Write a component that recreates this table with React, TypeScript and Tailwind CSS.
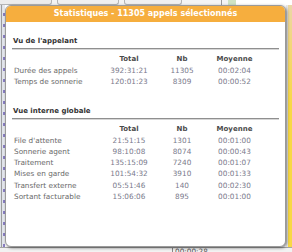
import React from "react";

type Row = { label: string; total: string; nb: string; avg: string };

const appelant: Row[] = [
  { label: "Durée des appels", total: "392:31:21", nb: "11305", avg: "00:02:04" },
  { label: "Temps de sonnerie", total: "120:01:23", nb: "8309", avg: "00:00:52" },
];

const interne: Row[] = [
  { label: "File d'attente", total: "21:51:15", nb: "1301", avg: "00:01:00" },
  { label: "Sonnerie agent", total: "98:10:08", nb: "8074", avg: "00:00:43" },
  { label: "Traitement", total: "135:15:09", nb: "7240", avg: "00:01:07" },
  { label: "Mises en garde", total: "101:54:32", nb: "3910", avg: "00:01:33" },
  { label: "Transfert externe", total: "05:51:46", nb: "140", avg: "00:02:30" },
  { label: "Sortant facturable", total: "15:06:06", nb: "895", avg: "00:01:00" },
];

function Section({ title, rows, first }: { title: string; rows: Row[]; first?: boolean }) {
  return (
    <div className={first ? "pt-[14px]" : "pt-[18px]"}>
      {/* Section title with rule */}
      <div className="h-[13px] border-b border-[#8f8f8f] shadow-[0_1px_0_#d6d6d6] text-[7px] font-bold leading-[11px] text-[#333] pl-[1px]">
        {title}
      </div>
      <div className="mt-[5px] pl-[2px] grid grid-cols-[90px_50px_56px_49px] text-[7.3px] leading-[11.2px]">
        <div />
        <div className="text-center font-bold text-[7px] text-[#4a4a4a]">Total</div>
        <div className="text-center font-bold text-[7px] text-[#4a4a4a]">Nb</div>
        <div className="text-center font-bold text-[7px] text-[#4a4a4a]">Moyenne</div>
        {rows.map((r) => (
          <React.Fragment key={r.label}>
            <div className="text-[#6a6a6a] whitespace-nowrap">{r.label}</div>
            <div className="text-center text-[#7a7a8c]">{r.total}</div>
            <div className="text-center text-[#7a7a8c]">{r.nb}</div>
            <div className="text-center text-[#7a7a8c]">{r.avg}</div>
          </React.Fragment>
        ))}
      </div>
    </div>
  );
}

export default function App() {
  return (
    <div
      className="relative w-[292px] h-[252px] overflow-hidden bg-white [font-variant-ligatures:none]"
      style={{ fontFamily: '"DejaVu Sans", Verdana, sans-serif' }}
    >
      {/* Page behind the dialog */}
      <div className="flex flex-col h-full">
        <div className="h-[5px] flex bg-[#f4f4f4]">
          <div className="w-[52px] border-r border-b border-[#b5b5b5] rounded-br-[3px] bg-[#ececec]" />
          <div className="ml-[5px] w-[62px] border-x border-b border-[#b5b5b5] rounded-b-[3px] bg-[#f0f0f0]" />
          <div className="ml-[5px] w-[58px] border-x border-b border-[#b5b5b5] rounded-b-[3px] bg-[#f0f0f0]" />
          <div className="ml-[39px] w-[1px] bg-[#9a9a9a]" />
          <div className="ml-[6px] w-[8px] bg-[#cfe3c4]" />
          <div className="flex-1 bg-white" />
        </div>
        <div className="flex-1 flex">
          <div className="w-[5px] flex bg-[#dfe3ea]">
            <div className="w-[1px] bg-[#9c9c9c] ml-[1px]" />
            <div className="ml-[1px] w-[2px] bg-[repeating-linear-gradient(to_bottom,#e7e9ee_0px,#e7e9ee_8px,#8a7fc4_8px,#8a7fc4_11px)]" />
          </div>
          <div className="flex-1 bg-white" />
          <div className="w-[6px] flex">
            <div className="w-[2px] bg-[#e9e9e9]" />
            <div className="flex-1 bg-[linear-gradient(to_bottom,#ead7a8_0px,#f3d778_40px,#f8d844_100px)]" />
          </div>
        </div>
        <div className="h-[5px] flex items-start bg-[#f2f2f2] border-t border-[#a5a5a5]">
          <div className="ml-[172px] h-full border-l border-[#888] pl-[2px] text-[7.3px] leading-[7px] text-[#555]">
            00:00:28
          </div>
        </div>
      </div>

      {/* Statistics dialog */}
      <div className="absolute left-[5px] top-[5px] w-[281px] h-[242px] bg-white border border-[#9a9a9a] rounded-[6px] shadow-[1px_1px_3px_rgba(0,0,0,0.5)] overflow-hidden">
        <div className="h-[16px] bg-[#f6ae3e] text-white text-[8px] font-bold leading-[16px] text-center">
          Statistiques - 11305 appels sélectionnés
        </div>
        <div className="px-[6px]">
          <Section title="Vu de l'appelant" rows={appelant} first />
          <Section title="Vue interne globale" rows={interne} />
        </div>
      </div>
    </div>
  );
}
